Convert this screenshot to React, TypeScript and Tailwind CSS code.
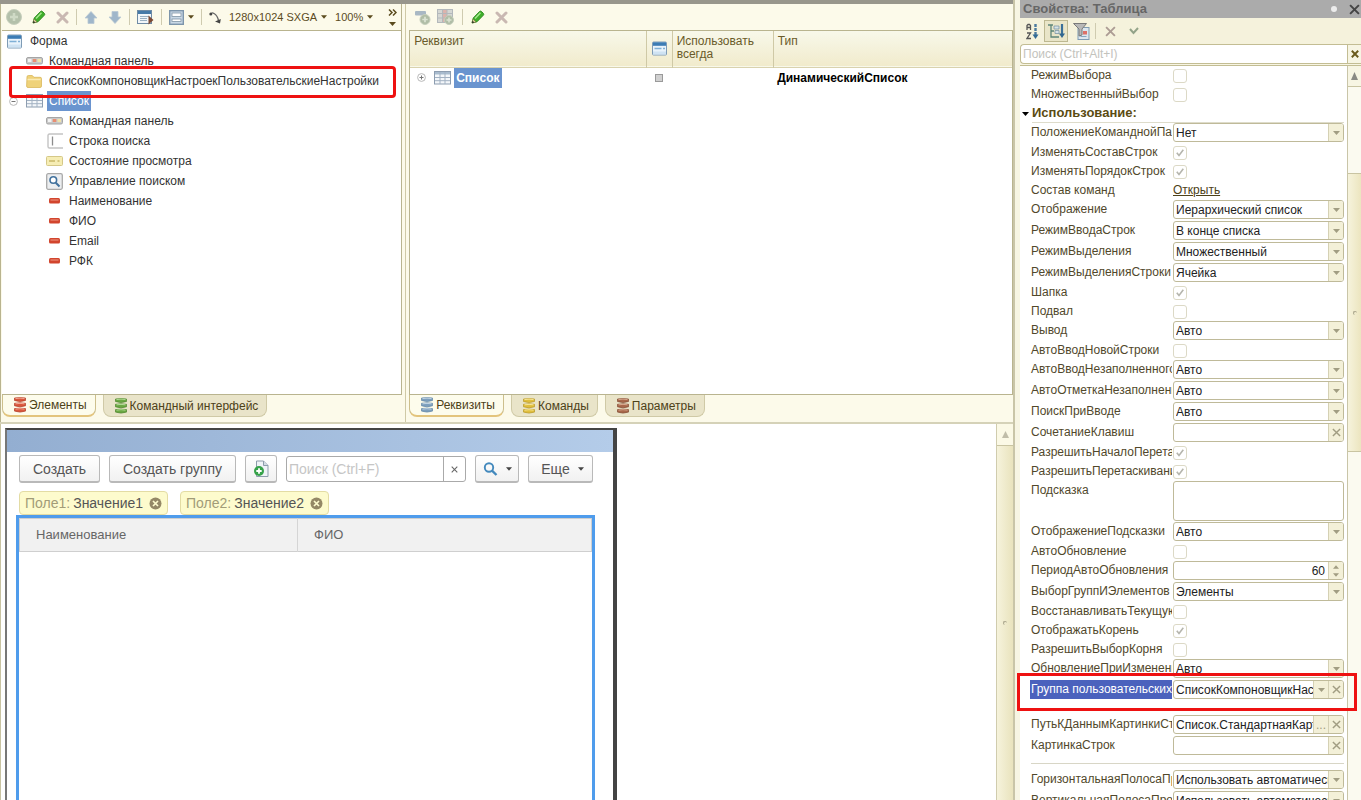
import React from 'react';

type RowKind = 'check' | 'select' | 'clear' | 'picker' | 'dots' | 'number' | 'area' | 'link' | 'header' | 'divider';

interface PropRow {
  kind: RowKind;
  label?: string;
  value?: string;
  checked?: boolean;
  active?: boolean;
}

const rows: PropRow[] = [
  { kind: 'check', label: 'РежимВыбора' },
  { kind: 'check', label: 'МножественныйВыбор' },
  { kind: 'header', label: 'Использование:' },
  { kind: 'select', label: 'ПоложениеКоманднойПанели', value: 'Нет' },
  { kind: 'check', label: 'ИзменятьСоставСтрок', checked: true },
  { kind: 'check', label: 'ИзменятьПорядокСтрок', checked: true },
  { kind: 'link', label: 'Состав команд', value: 'Открыть' },
  { kind: 'select', label: 'Отображение', value: 'Иерархический список' },
  { kind: 'select', label: 'РежимВводаСтрок', value: 'В конце списка' },
  { kind: 'select', label: 'РежимВыделения', value: 'Множественный' },
  { kind: 'select', label: 'РежимВыделенияСтроки', value: 'Ячейка' },
  { kind: 'check', label: 'Шапка', checked: true },
  { kind: 'check', label: 'Подвал' },
  { kind: 'select', label: 'Вывод', value: 'Авто' },
  { kind: 'check', label: 'АвтоВводНовойСтроки' },
  { kind: 'select', label: 'АвтоВводНезаполненного', value: 'Авто' },
  { kind: 'select', label: 'АвтоОтметкаНезаполненного', value: 'Авто' },
  { kind: 'select', label: 'ПоискПриВводе', value: 'Авто' },
  { kind: 'clear', label: 'СочетаниеКлавиш', value: '' },
  { kind: 'check', label: 'РазрешитьНачалоПеретаскивания', checked: true },
  { kind: 'check', label: 'РазрешитьПеретаскивание', checked: true },
  { kind: 'area', label: 'Подсказка' },
  { kind: 'select', label: 'ОтображениеПодсказки', value: 'Авто' },
  { kind: 'check', label: 'АвтоОбновление' },
  { kind: 'number', label: 'ПериодАвтоОбновления', value: '60' },
  { kind: 'select', label: 'ВыборГруппИЭлементов', value: 'Элементы' },
  { kind: 'check', label: 'ВосстанавливатьТекущуюСтроку' },
  { kind: 'check', label: 'ОтображатьКорень', checked: true },
  { kind: 'check', label: 'РазрешитьВыборКорня' },
  { kind: 'select', label: 'ОбновлениеПриИзменении', value: 'Авто' },
  { kind: 'picker', label: 'Группа пользовательских', value: 'СписокКомпоновщикНастроек', active: true },
  { kind: 'divider' },
  { kind: 'dots', label: 'ПутьКДаннымКартинкиСтроки', value: 'Список.СтандартнаяКартинка' },
  { kind: 'clear', label: 'КартинкаСтрок', value: '' },
  { kind: 'divider' },
  { kind: 'select', label: 'ГоризонтальнаяПолосаПрокрутки', value: 'Использовать автоматически' },
  { kind: 'select', label: 'ВертикальнаяПолосаПрокрутки', value: 'Использовать автоматически' },
];

function rowHeight(i: number): string {
  const { kind } = rows[i];
  if (kind === 'area') return 'h-[41px]';
  if (kind === 'divider') return 'h-3.5';
  if (kind === 'check' || kind === 'link' || kind === 'header') return 'h-[19px]';
  const next = rows[i + 1]?.kind;
  return next === 'check' || (kind === 'clear' && next === 'divider') ? 'h-5' : 'h-[21px]';
}

/* ---------- small glyphs ---------- */

const Down = ({ className = '' }: { className?: string }) => (
  <svg className={`shrink-0 ${className}`} width="7" height="4" viewBox="0 0 7 4" aria-hidden="true">
    <path d="M0 0h7L3.5 4z" fill="currentColor" />
  </svg>
);

const Cross = ({ size = 10, className = '', w = 2 }: { size?: number; className?: string; w?: number }) => (
  <svg className={`shrink-0 ${className}`} width={size} height={size} viewBox="0 0 10 10" aria-hidden="true">
    <path d="M1 1l8 8M9 1L1 9" stroke="currentColor" strokeWidth={w} fill="none" />
  </svg>
);

const Pencil = () => (
  <svg width="14" height="14" viewBox="0 0 14 14" aria-hidden="true">
    <path d="M1 13l1.200-5L8.500 1.500q1-1 2 0l1.800 1.800q1 1 0 2L6 11.800z" fill="#3fae2a" stroke="#1f7d14" strokeWidth=".8" />
    <path d="M4 8.500l5.500-5.700" stroke="#a5e88e" strokeWidth="1.500" />
    <path d="M1 13l1-4 3 3z" fill="#e9d9a8" stroke="#7b7340" strokeWidth=".6" />
    <path d="M1 13l.6-2.300 1.700 1.700z" fill="#222" />
  </svg>
);

const DeleteX = () => (
  <svg width="13" height="13" viewBox="0 0 13 13" aria-hidden="true">
    <path d="M2 2l9 9M11 2l-9 9" stroke="#c9b8b2" strokeWidth="3" strokeLinecap="round" />
  </svg>
);

const PlusDisc = () => (
  <svg width="16" height="16" viewBox="0 0 16 16" aria-hidden="true">
    <circle cx="8" cy="8" r="7.500" fill="#b3c0aa" stroke="#c7cfbd" />
    <path d="M8 4v8M4 8h8" stroke="#cfdac6" strokeWidth="2.500" />
  </svg>
);

const Arrow = ({ flip }: { flip?: boolean }) => (
  <svg className={flip ? 'rotate-180' : ''} width="14" height="13" viewBox="0 0 14 13" aria-hidden="true">
    <path d="M7 .5l6 6.500h-3V12.500H4V7H1z" fill="#9fb6ca" stroke="#b9c8d3" strokeWidth=".8" />
  </svg>
);

const FormIcon = ({ size = 15 }: { size?: number }) => (
  <svg className="shrink-0" width={size} height={size} viewBox="0 0 15 15" aria-hidden="true">
    <rect x=".5" y="1" width="14" height="13" rx="1" fill="#e9f3fb" stroke="#7e9bb5" />
    <rect x="1" y="1.300" width="13" height="3.500" fill="#3c7cb4" />
    <path d="M2.500 7.500h7M11 7.500h2" stroke="#7fb0d6" strokeWidth="1.500" />
    <path d="M1 10.500h13v3H1z" fill="#cfe3f3" />
  </svg>
);

const FormRun = () => (
  <svg width="17" height="15" viewBox="0 0 17 15" aria-hidden="true">
    <rect x=".5" y=".5" width="14" height="13" fill="#f2f6f9" stroke="#6f8ba5" />
    <path d="M1 1h13v3H1z" fill="#467aa8" />
    <path d="M3 6.500h9M3 8.500h7M3 10.500h7" stroke="#9ab0c2" />
    <path d="M11.500 5.500l5 4.500-5 4.500z" fill="#7c4a34" />
  </svg>
);

const LayoutIcon = () => (
  <svg width="15" height="15" viewBox="0 0 15 15" aria-hidden="true">
    <rect x=".7" y=".7" width="13.600" height="13.600" fill="#c9d8e6" stroke="#7d95ab" strokeWidth="1.400" />
    <rect x="3" y="3" width="9" height="3.500" fill="#fff" stroke="#7f93a5" strokeWidth=".8" />
    <rect x="3" y="9" width="9" height="2.500" fill="#fff" stroke="#7f93a5" strokeWidth=".8" />
  </svg>
);

const CurveIcon = () => (
  <svg width="13" height="13" viewBox="0 0 13 13" aria-hidden="true">
    <path d="M1.500 3.500q1-2.500 3.500-1 3.500 2 4.500 7" fill="none" stroke="#666" strokeWidth="1.300" />
    <circle cx="1.800" cy="3" r="1.500" fill="#444" />
    <path d="M6 10.500l5.800-2.500-.8 4.500z" fill="#444" />
  </svg>
);

const BarIcon = () => (
  <svg width="17" height="8" viewBox="0 0 17 8" aria-hidden="true">
    <rect x=".5" y=".5" width="16" height="6.500" rx="1.500" fill="#c9c9c9" stroke="#a5a5a5" />
    <rect x="2" y="2" width="3.500" height="3" fill="#f2f2f2" />
    <rect x="6.800" y="2" width="3.500" height="3" fill="#e98d72" />
    <rect x="11.500" y="2" width="3.500" height="3" fill="#f0e3a8" />
  </svg>
);

const FolderIcon = () => (
  <svg width="16" height="13" viewBox="0 0 16 13" aria-hidden="true">
    <path d="M1 2q0-1.500 1.300-1.500h4L8 2.300h6q1.500 0 1.500 1.200V11q0 1.500-1.500 1.500H2Q.6 12.500.6 11z" fill="#efd27a" stroke="#d9b85c" strokeWidth=".8" />
    <path d="M1.500 4.500h13" stroke="#faeab4" strokeWidth="1.500" />
  </svg>
);

const TableIcon = () => (
  <svg className="shrink-0" width="17" height="14" viewBox="0 0 17 14" aria-hidden="true">
    <rect x=".5" y=".5" width="16" height="12.500" fill="#f4f7fa" stroke="#8d9db0" />
    <path d="M1 1h15v2.500H1z" fill="#a9bccf" />
    <path d="M6 1v12M11 1v12M1 6.500h15M1 9.700h15" stroke="#a3b2c3" />
  </svg>
);

const FieldIcon = () => (
  <svg width="16" height="16" viewBox="0 0 16 16" aria-hidden="true">
    <path d="M16 1H2.500Q1 1 1 2.500v11Q1 15 2.500 15H16" fill="none" stroke="#c4c4c4" strokeWidth="1.400" />
    <path d="M5.500 3.500v9" stroke="#8d8d8d" strokeWidth="1.300" />
  </svg>
);

const StateIcon = () => (
  <svg width="17" height="10" viewBox="0 0 17 10" aria-hidden="true">
    <rect x=".5" y=".5" width="16" height="9" rx="1" fill="#f6edb4" stroke="#d5c888" />
    <path d="M3 5h6M11.500 5h2" stroke="#c9b868" strokeWidth="1.500" />
  </svg>
);

const SearchBoxIcon = () => (
  <svg width="17" height="17" viewBox="0 0 17 17" aria-hidden="true">
    <rect x=".7" y=".7" width="15.600" height="15.600" rx="1.500" fill="#eceef0" stroke="#a9a9a9" strokeWidth="1.300" />
    <circle cx="7.300" cy="7" r="3.300" fill="#fff" stroke="#41719d" strokeWidth="1.600" />
    <path d="M9.800 9.700l3.700 3.800" stroke="#41719d" strokeWidth="2" />
  </svg>
);

const RedBar = () => (
  <svg width="11" height="6" viewBox="0 0 11 6" aria-hidden="true">
    <rect width="11" height="5.500" rx="1.500" fill="#d2452d" />
    <path d="M1.500 2h8" stroke="#ef9a86" />
  </svg>
);

const Stack = ({ fill, light, dark }: { fill: string; light: string; dark: string }) => (
  <svg className="shrink-0" width="12" height="16" viewBox="0 0 12 16" aria-hidden="true">
    {[0, 5.3, 10.6].map((y) => (
      <g key={y}>
        <path d={`M.5 ${y + 1}q5.500-1 11 0v2.500q-5.500 2-11 0z`} fill={fill} stroke={dark} strokeWidth=".7" />
        <path d={`M1.500 ${y + 1.5}q4.500-.8 9 0`} stroke={light} fill="none" />
      </g>
    ))}
  </svg>
);

const Magnifier = () => (
  <svg width="15" height="14" viewBox="0 0 15 14" aria-hidden="true">
    <circle cx="6" cy="5.500" r="4.200" fill="none" stroke="#4389bd" strokeWidth="1.900" />
    <path d="M9 8.700l4.500 4.300" stroke="#4389bd" strokeWidth="2.400" />
  </svg>
);

const AddDoc = () => (
  <svg width="17" height="18" viewBox="0 0 17 18" aria-hidden="true">
    <path d="M3.500 1h7L15 5.500v11H3.500z" fill="#eff3f7" stroke="#8d9cab" />
    <path d="M10.500 1v4.500H15" fill="#d2dbe4" stroke="#8d9cab" />
    <circle cx="6" cy="11" r="5" fill="#36a24a" />
    <path d="M6 8.300v5.400M3.300 11h5.400" stroke="#fff" strokeWidth="1.800" />
  </svg>
);

const AddAttr = () => (
  <svg width="16" height="16" viewBox="0 0 16 16" aria-hidden="true">
    <rect x="0" y="2" width="11" height="4.500" rx="1" fill="#a9b8c4" />
    <circle cx="10" cy="10.500" r="5" fill="#b0bda6" stroke="#c5cebc" />
    <path d="M10 7.800v5.400M7.300 10.500h5.400" stroke="#dbe3d3" strokeWidth="1.700" />
  </svg>
);

const AddColumn = () => (
  <svg width="17" height="16" viewBox="0 0 17 16" aria-hidden="true">
    <rect x=".5" y=".5" width="15" height="13" fill="#d5d7d3" stroke="#b3b8bb" />
    <path d="M5.500 1h4.500v12H5.500z" fill="#dcb3ac" />
    <path d="M5.500 1v12M10 1v12M1 4.500h14M1 9h14" stroke="#b3b8bb" />
    <circle cx="12" cy="11" r="4.500" fill="#b0bda6" stroke="#c5cebc" />
    <path d="M12 8.500v5M9.500 11h5" stroke="#dbe3d3" strokeWidth="1.500" />
  </svg>
);

const Expander = ({ open }: { open?: boolean }) => (
  <svg className="shrink-0" width="9" height="9" viewBox="0 0 9 9" aria-hidden="true">
    <circle cx="4.500" cy="4.500" r="3.900" fill="#fff" stroke="#b8b8b8" />
    <path d={open ? 'M2.500 4.500h4' : 'M2.500 4.500h4M4.500 2.500v4'} stroke="#777" />
  </svg>
);

const SortIcon = () => (
  <svg width="13" height="17" viewBox="0 0 13 17" aria-hidden="true">
    <path d="M1 7V2.500l1-1h1.500l1 1V7M1 4.500h3.500M1 10h3.500L1 15.500h4" fill="none" stroke="#555" strokeWidth="1.300" />
    <path d="M9.500 1v12" stroke="#4b7a9e" strokeWidth="2.400" strokeDasharray="3 1" />
    <path d="M6.500 11.500h6L9.500 16z" fill="#336a94" />
  </svg>
);

const TreeSort = () => (
  <svg width="17" height="16" viewBox="0 0 17 16" aria-hidden="true">
    <path d="M0 2h5M3 2v12h8M3 8h3" fill="none" stroke="#5e8578" strokeWidth="1.300" />
    <path d="M6 3h5v3H6zM7 7.500h4v3H7z" fill="#d6e2e6" stroke="#7b98a6" strokeWidth=".8" />
    <path d="M14 1v11" stroke="#3a6f98" strokeWidth="2.200" />
    <path d="M11 10.500h6L14 15z" fill="#2f668f" />
  </svg>
);

const FilterIcon = () => (
  <svg width="17" height="17" viewBox="0 0 17 17" aria-hidden="true">
    <rect x="5" y="4.500" width="11" height="12" fill="#dce6ee" stroke="#7f9bb3" />
    <path d="M7.500 13.500h6" stroke="#86a6bf" />
    <rect x="10" y="8" width="4" height="3.500" fill="#dd7068" />
    <path d="M.5.500h13L9 6v6l-3 1V6z" fill="#b8b8b8" stroke="#7a7a7a" />
  </svg>
);

/* ---------- form structure tree ---------- */

const treeItems = [
  { text: 'Командная панель', icon: <BarIcon /> },
  { text: 'Строка поиска', icon: <FieldIcon /> },
  { text: 'Состояние просмотра', icon: <StateIcon /> },
  { text: 'Управление поиском', icon: <SearchBoxIcon /> },
  { text: 'Наименование', icon: <RedBar /> },
  { text: 'ФИО', icon: <RedBar /> },
  { text: 'Email', icon: <RedBar /> },
  { text: 'РФК', icon: <RedBar /> },
];

const ToolButton = ({ label, children }: { label: string; children: React.ReactNode }) => (
  <button type="button" aria-label={label} className="flex shrink-0 items-center gap-1 text-[#5b4b1e]">
    {children}
  </button>
);

const Sep = () => <span className="h-4 w-px shrink-0 bg-[#cfcbb0]" />;

function Tab({ active, label, children }: { active?: boolean; label: string; children: React.ReactNode }) {
  return (
    <button
      type="button"
      role="tab"
      aria-selected={!!active}
      className={`flex items-center gap-[3px] rounded-b-lg border border-t-0 pl-[11px] pr-2 text-[#4d4118] ${
        active
          ? 'h-[22px] border-[#cdbf8c] border-b-2 border-b-[#e3c47c] bg-[#fdfcec]'
          : 'h-[22px] border-[#cfc9a6] bg-[#e9e4c9]'
      }`}
    >
      {children}
      <span className="whitespace-nowrap">{label}</span>
    </button>
  );
}

function ElementsPane() {
  return (
    <section className="flex w-2/5 flex-col border-l border-[#b9b48f] pl-px pr-[3px]">
      <div className="flex h-[26px] shrink-0 items-center gap-[7px] overflow-hidden border-r border-[#b9b48f] px-1 text-[11px]">
        <div className="flex items-center gap-2.5">
          <ToolButton label="Добавить"><PlusDisc /></ToolButton>
          <ToolButton label="Изменить"><Pencil /></ToolButton>
          <ToolButton label="Удалить"><DeleteX /></ToolButton>
        </div>
        <Sep />
        <div className="flex items-center gap-2.5">
          <ToolButton label="Вверх"><Arrow /></ToolButton>
          <ToolButton label="Вниз"><Arrow flip /></ToolButton>
        </div>
        <Sep />
        <ToolButton label="Проверить"><FormRun /></ToolButton>
        <Sep />
        <ToolButton label="Разметка"><LayoutIcon /><Down className="w-1.5" /></ToolButton>
        <Sep />
        <ToolButton label="Порядок обхода"><CurveIcon /></ToolButton>
        <div className="flex items-center gap-2">
          <ToolButton label="Разрешение"><span className="whitespace-nowrap">1280x1024 SXGA</span><Down className="w-1.5" /></ToolButton>
          <ToolButton label="Масштаб"><span>100%</span><Down className="w-1.5" /></ToolButton>
        </div>
        <button type="button" aria-label="Ещё команды" className="ml-auto flex shrink-0 flex-col items-center gap-1.5 text-[#5b4b1e]">
          <svg width="9" height="7" viewBox="0 0 9 7" aria-hidden="true">
            <path d="M1 .5l3 3-3 3M5 .5l3 3-3 3" fill="none" stroke="currentColor" strokeWidth="1.500" />
          </svg>
          <Down />
        </button>
      </div>
      <div className="relative min-h-0 flex-1 overflow-hidden border border-l-0 border-[#b9b48f] bg-white text-[#333]">
        <ul role="tree" aria-label="Элементы формы" className="*:flex *:h-5 *:items-center">
          <li role="treeitem" className="gap-2 pl-[5px]"><FormIcon />Форма</li>
          <li role="treeitem" className="pl-6">
            <span className="flex w-[23px] shrink-0"><BarIcon /></span>Командная панель
          </li>
          <li role="treeitem" className="pl-6">
            <span className="flex w-[23px] shrink-0"><FolderIcon /></span>
            СписокКомпоновщикНастроекПользовательскиеНастройки
          </li>
          <li role="treeitem" aria-selected="true" className="pl-[7px]">
            <span className="flex w-[17px] shrink-0"><Expander open /></span>
            <span className="flex w-[21px] shrink-0"><TableIcon /></span>
            <span className="bg-[#6a94cf] px-0.5 leading-5 text-white">Список</span>
          </li>
          {treeItems.map((it) => (
            <li role="treeitem" key={it.text} className="pl-11">
              <span className="mr-1.5 flex w-[17px] shrink-0 justify-center">{it.icon}</span>
              {it.text}
            </li>
          ))}
        </ul>
        <div className="absolute left-[7px] right-[5px] top-[35px] h-8 rounded-sm border-[3px] border-[#ee1111]" />
      </div>
      <div role="tablist" className="flex h-[27px] shrink-0 gap-[7px]">
        <Tab active label="Элементы"><Stack fill="#d9573d" light="#f4ac98" dark="#b03a24" /></Tab>
        <Tab label="Командный интерфейс"><Stack fill="#6aa842" light="#b4dc97" dark="#4a822a" /></Tab>
      </div>
    </section>
  );
}

function AttributesPane() {
  const th = 'border-r border-[#cfc9a6] px-1 pt-1 text-left align-top font-normal leading-[13px]';
  return (
    <section className="flex min-w-0 flex-1 flex-col border-l border-[#cfc9a6] pl-px">
      <div className="ml-2 flex h-[26px] shrink-0 items-center gap-2">
        <div className="flex items-center gap-1.5">
          <ToolButton label="Добавить реквизит"><AddAttr /></ToolButton>
          <ToolButton label="Добавить колонку"><AddColumn /></ToolButton>
        </div>
        <Sep />
        <div className="flex items-center gap-2.5">
          <ToolButton label="Изменить"><Pencil /></ToolButton>
          <ToolButton label="Удалить"><DeleteX /></ToolButton>
        </div>
      </div>
      <div className="ml-0.5 min-h-0 flex-1 overflow-hidden border border-[#b9b48f] bg-white">
        <table className="w-full table-fixed border-collapse">
          <thead>
            <tr className="h-9 border-b border-[#d9d2ae] bg-linear-to-b from-[#f8f8ea] to-[#f1ebcc] text-[#6a5b2a]">
              <th className={`w-[236px] ${th}`}>Реквизит</th>
              <th className="w-[26px] border-r border-[#cfc9a6]" aria-label="В форме">
                <span className="flex justify-center"><FormIcon /></span>
              </th>
              <th className={`w-[101px] ${th}`}>Использовать всегда</th>
              <th className="px-1 pt-1 text-left align-top font-normal leading-[13px]">Тип</th>
            </tr>
          </thead>
          <tbody>
            <tr className="font-bold">
              <td>
                <span className="flex h-5 items-center pl-[7px]">
                  <span className="flex w-[17px] shrink-0"><Expander /></span>
                  <span className="flex w-5 shrink-0"><TableIcon /></span>
                  <span className="bg-[#6a94cf] px-0.5 leading-5 text-white">Список</span>
                </span>
              </td>
              <td>
                <svg className="mx-auto" width="8" height="8" viewBox="0 0 8 8" aria-hidden="true">
                  <rect x=".5" y=".5" width="7" height="7" fill="#d0d0d0" stroke="#9a9a9a" />
                </svg>
              </td>
              <td />
              <td className="px-1 text-black">ДинамическийСписок</td>
            </tr>
          </tbody>
        </table>
      </div>
      <div role="tablist" className="ml-0.5 flex h-[27px] shrink-0 gap-[7px]">
        <Tab active label="Реквизиты"><Stack fill="#7d9fbd" light="#c3d6e6" dark="#5f84a5" /></Tab>
        <Tab label="Команды"><Stack fill="#e0bf3e" light="#f8e79a" dark="#b89722" /></Tab>
        <Tab label="Параметры"><Stack fill="#a8674a" light="#d9a98f" dark="#814930" /></Tab>
      </div>
    </section>
  );
}

/* ---------- form preview ---------- */

const formButton =
  'flex h-7 shrink-0 items-center justify-center rounded-[3px] border border-b-2 border-[#b9b9b9] bg-linear-to-b from-white to-[#f1f1f1] text-[#555]';

const Chip = ({ name, value }: { name: string; value: string }) => (
  <span className="flex h-6 items-center rounded-sm border border-[#e3dca4] bg-[#fdfbcd] px-[5px] text-[#555]">
    <span className="mr-[3px] text-[#a29c78]">{name}</span>
    {value}
    <button type="button" aria-label={`Убрать ${name}`} className="ml-1.5">
      <svg width="13" height="13" viewBox="0 0 13 13" aria-hidden="true">
        <circle cx="6.500" cy="6.500" r="6" fill="#948866" />
        <path d="M4 4l5 5M9 4L4 9" stroke="#fdfbcd" strokeWidth="1.700" />
      </svg>
    </button>
  </span>
);

function FormPreview() {
  return (
    <div className="flex min-h-0 flex-[378] overflow-hidden border-t-2 border-[#d5d2b8] bg-white">
      <div className="flex min-w-0 flex-1 overflow-hidden border-l border-[#c9c4a2] pl-1 pt-1">
        <div className="flex w-[612px] max-w-full shrink-0 flex-col border-l-2 border-r-4 border-t-2 border-[#444] border-l-[#777] bg-white text-sm">
          <div className="h-[22px] shrink-0 bg-linear-to-r from-[#93aed1] to-[#b4cce9]" />
          <div className="flex items-center gap-[9px] pl-3 pr-5 pt-[3px]">
            <button type="button" className={`${formButton} w-[81px]`}>Создать</button>
            <button type="button" className={`${formButton} w-[127px]`}>Создать группу</button>
            <button type="button" aria-label="Создать копированием" className={`${formButton} w-8`}><AddDoc /></button>
            <div className="flex h-[26px] min-w-0 flex-1 rounded-[3px] border border-[#aaa]">
              <input aria-label="Поиск" placeholder="Поиск (Ctrl+F)" className="min-w-0 flex-1 px-0.5 outline-none placeholder:text-[#c6c6c6]" />
              <button type="button" aria-label="Очистить" className="flex w-[22px] items-center justify-center border-l border-[#aaa] text-[#666]">
                <Cross size={7} w={1.5} />
              </button>
            </div>
            <button type="button" aria-label="Найти" className={`${formButton} w-11 gap-2`}><Magnifier /><Down className="w-1.5 text-[#444]" /></button>
            <button type="button" className={`${formButton} w-[65px] gap-2 pl-1`}>Еще<Down className="w-1.5 text-[#444]" /></button>
          </div>
          <div className="flex gap-3 pl-3 pt-2">
            <Chip name="Поле1:" value="Значение1" />
            <Chip name="Поле2:" value="Значение2" />
          </div>
          <div className="ml-[9px] mr-[18px] flex-1 border-x-[3px] border-t-[3px] border-[#4f9cec]">
            <table className="w-full table-fixed border-collapse border border-[#cfcfcf] text-[13px]">
              <thead>
                <tr className="h-[33px] border-b border-[#cfcfcf] bg-[#f1f1f1] text-[#666]">
                  <th className="w-[278px] border-r border-[#d5d5d5] px-4 text-left font-normal">Наименование</th>
                  <th className="px-4 text-left font-normal">ФИО</th>
                </tr>
              </thead>
            </table>
          </div>
        </div>
      </div>
      <div className="flex w-[17px] shrink-0 flex-col border-l border-[#d0ccae] bg-linear-to-r from-[#f6f3dc] to-[#e9e3bd]">
        <span className="flex h-[22px] shrink-0 items-center justify-center border-b border-[#c9c4a2] bg-[#fbf9e6]">
          <svg width="7" height="7" viewBox="0 0 7 7" aria-hidden="true"><path d="M3.500 0L7 7H0z" fill="#c0bda9" /></svg>
        </span>
        <span className="flex flex-1 items-center justify-center">
          <span className="size-1 rounded-full border-l border-t border-[#a9a58c]" />
        </span>
      </div>
    </div>
  );
}

/* ---------- properties panel ---------- */

const segment = 'flex shrink-0 items-center justify-center bg-[#f3f0d8] text-[#a19d82]';

function Editor({ row, id }: { row: PropRow; id: string }) {
  const box = 'flex h-[19px] min-w-0 flex-1 overflow-hidden rounded-[3px] border border-[#bfba99] bg-white text-[#222]';
  const input = 'min-w-0 flex-1 pl-0.5 outline-none';
  switch (row.kind) {
    case 'check':
      return (
        <span className="relative flex h-[19px] items-center">
          <input
            id={id}
            type="checkbox"
            defaultChecked={row.checked}
            className="peer size-3.5 appearance-none rounded-[3px] border border-[#dcd9c6] bg-white"
          />
          <svg className="pointer-events-none absolute left-[3px] hidden peer-checked:block" width="8" height="8" viewBox="0 0 8 8" aria-hidden="true">
            <path d="M.8 3.800L3 6.500 7.300.8" fill="none" stroke="#b5b5ad" strokeWidth="1.600" />
          </svg>
        </span>
      );
    case 'link':
      return <a id={id} href="#commands" className="leading-[19px] text-[#4d4118] underline">{row.value}</a>;
    case 'area':
      return <textarea id={id} className="h-10 min-w-0 flex-1 resize-none rounded-[3px] border border-[#bfba99] bg-white outline-none" />;
    case 'select':
      return (
        <div className={box}>
          <select id={id} className="min-w-0 flex-1 appearance-none pl-0.5 outline-none"><option>{row.value}</option></select>
          <span className={`${segment} w-[15px] border-l border-[#d5d1b4]`}><Down /></span>
        </div>
      );
    case 'number':
      return (
        <div className={box}>
          <input id={id} defaultValue={row.value} inputMode="numeric" className={`${input} pr-[3px] text-right`} />
          <span className={`${segment} w-[15px] flex-col gap-1 border-l border-[#d5d1b4]`}>
            <Down className="w-1.5 rotate-180" /><Down className="w-1.5" />
          </span>
        </div>
      );
    default:
      return (
        <div className={box}>
          <input id={id} defaultValue={row.value} className={input} />
          {row.kind !== 'clear' && (
            <button type="button" aria-label="Выбрать" className={`${segment} w-[15px] border-l border-[#d5d1b4]`}>
              {row.kind === 'picker' ? <Down /> : '...'}
            </button>
          )}
          <button type="button" aria-label="Очистить" className={`${segment} w-[15px] border-l border-[#d5d1b4]`}>
            <Cross size={9} w={1.6} />
          </button>
        </div>
      );
  }
}

function PropertiesPanel() {
  return (
    <aside className="relative flex w-[348px] shrink-0 flex-col border-l-2 border-[#c9c5a8] bg-[#f7f5e3] pl-[5px]">
      <header className="flex h-[18px] shrink-0 items-center bg-[#ababab] pl-[3px] pr-px font-bold text-[#666]">
        <h2 className="flex-1 text-[13px]">Свойства: Таблица</h2>
        <span className="mr-3 size-1.5 rounded-full bg-[#ececec]" />
        <button type="button" aria-label="Закрыть" className="text-[#444]"><Cross size={11} w={1.8} /></button>
      </header>
      <div className="flex h-[26px] shrink-0 items-center gap-[5px] bg-[#f5f2dc] pl-1.5">
        <ToolButton label="По алфавиту"><SortIcon /></ToolButton>
        <button type="button" aria-label="По категориям" className="flex h-[22px] w-6 items-center justify-center border border-[#bdb891] bg-[#e9e5c8]"><TreeSort /></button>
        <ToolButton label="Отбор"><FilterIcon /></ToolButton>
        <Sep />
        <button type="button" aria-label="Отменить" className="ml-1 text-[#ac9c94]"><Cross size={11} w={1.7} /></button>
        <button type="button" aria-label="Применить" className="ml-2">
          <svg width="10" height="8" viewBox="0 0 10 8" aria-hidden="true"><path d="M1 2l3.500 4L9 1" fill="none" stroke="#93a389" strokeWidth="2" /></svg>
        </button>
      </div>
      <div className="flex h-5 shrink-0 rounded-l-sm border border-r-0 border-[#c3bd93] bg-white">
        <input aria-label="Поиск свойств" placeholder="Поиск (Ctrl+Alt+I)" className="min-w-0 flex-1 px-0.5 outline-none placeholder:text-[#c3c3bd]" />
        <button type="button" aria-label="Очистить поиск" className="flex w-3.5 items-center justify-center border-l border-[#c3bd93] bg-[#f7f5e3] text-[#6a5a1c]"><Cross size={8} w={2.4} /></button>
      </div>
      <div className="mt-px flex min-h-0 flex-1 overflow-hidden border-t border-[#c3bd93] bg-white">
        <div className="min-w-0 flex-1 overflow-hidden pr-[3px]">
          {rows.map((row, i) => {
            const id = `prop-${i}`;
            if (row.kind === 'divider') {
              return <div key={id} className={`${rowHeight(i)} ml-[11px] flex items-center`}><span className="h-px flex-1 bg-[#d8d6c6]" /></div>;
            }
            if (row.kind === 'header') {
              return (
                <div key={id} className={`${rowHeight(i)} flex items-center gap-[3px] pl-0.5`}>
                  <Down className="text-black" />
                  <h3 className="flex-1 border-b border-[#dedccb] text-[13px] font-bold leading-[18px] text-[#5b4b12]">{row.label}</h3>
                </div>
              );
            }
            return (
              <div key={id} className={`${rowHeight(i)} flex items-start gap-px pl-2.5`}>
                <label
                  htmlFor={id}
                  className={`w-[142px] shrink-0 overflow-hidden whitespace-nowrap pl-px leading-[19px] ${
                    row.active ? 'bg-[#4b62bd] text-white' : 'text-[#51482b]'
                  }`}
                >
                  {row.label}
                </label>
                <Editor row={row} id={id} />
              </div>
            );
          })}
        </div>
        <div className="flex w-3.5 shrink-0 flex-col border-l border-[#c9c5a8] bg-[#fbfaf0]">
          <span className="flex h-[21px] shrink-0 items-center justify-center border-b border-[#c9c4a2] bg-[#f7f5e3]">
            <svg width="7" height="8" viewBox="0 0 7 8" aria-hidden="true"><path d="M3.500 0L7 8H0z" fill="#8a8a84" /></svg>
          </span>
          <span className="flex-[86]" />
          <span className="flex flex-[279] items-center justify-center border-y border-[#c9c4a2] bg-linear-to-r from-[#f6f3dc] to-[#ece5bf]">
            <span className="size-1 rounded-full border-l border-t border-[#a9a58c]" />
          </span>
          <span className="flex-[349]" />
        </div>
      </div>
      <div className="pointer-events-none absolute left-0.5 right-1 top-[673px] h-[38px] border-[3px] border-[#ee1111]" />
    </aside>
  );
}

export default function App() {
  return (
    <div className="flex h-screen overflow-hidden bg-[#fcfaea] font-['Liberation_Sans',Arial,sans-serif] text-xs">
      <main className="flex min-w-0 flex-1 flex-col">
        <div className="flex min-h-0 flex-[421] border-t-4 border-[#98968c]">
          <ElementsPane />
          <AttributesPane />
        </div>
        <FormPreview />
      </main>
      <PropertiesPanel />
    </div>
  );
}
